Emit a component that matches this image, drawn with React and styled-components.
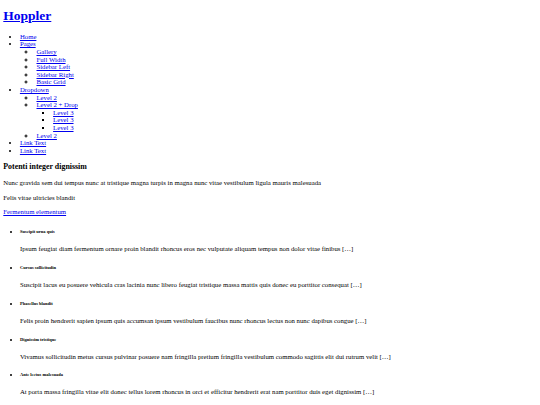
import React from 'react';
import styled, { createGlobalStyle } from 'styled-components';

const Global = createGlobalStyle`
  html, body {
    margin: 0;
    padding: 0;
    background: #fff;
  }
  body {
    font-family: "Liberation Serif", "Times New Roman", serif;
    font-size: 6.75px;
    line-height: 7.6px;
    color: #000;
  }
`;

const Page = styled.div`
  padding: 0 3.3px;
  display: flow-root;
`;

const Link = styled.a`
  color: #0000ee;
  text-decoration: underline;
`;

const SiteTitle = styled.h1`
  font-size: 13.5px;
  line-height: 15.5px;
  font-weight: bold;
  margin: 8.4px 0 9px;
`;

const NavList = styled.ul`
  margin: 0;
  padding-left: 16.6px;
  list-style-type: ${({ $type }) => $type || 'disc'};
`;

const SectionTitle = styled.h3`
  font-size: 7.9px;
  line-height: 8.8px;
  margin: 9.1px 0 5.9px;
`;

const Text = styled.p`
  margin: 7px 0;
`;

const PostList = styled.ul`
  margin: 13.1px 0 0;
  padding-left: 16.6px;
  list-style-type: disc;
`;

const PostItem = styled.li`
  font-size: 4.5px;
  line-height: 5px;

  &::marker {
    font-size: 5.5px;
  }
`;

const PostTitle = styled.h6`
  font-size: 4.5px;
  line-height: 5px;
  margin: 12.1px 0 11.1px;
`;

const Excerpt = styled.p`
  font-size: 6.75px;
  line-height: 7.6px;
  margin: 7px 0 12.1px;
`;

const nav = [
  { label: 'Home' },
  {
    label: 'Pages',
    children: [
      { label: 'Gallery' },
      { label: 'Full Width' },
      { label: 'Sidebar Left' },
      { label: 'Sidebar Right' },
      { label: 'Basic Grid' },
    ],
  },
  {
    label: 'Dropdown',
    children: [
      { label: 'Level 2' },
      {
        label: 'Level 2 + Drop',
        children: [{ label: 'Level 3' }, { label: 'Level 3' }, { label: 'Level 3' }],
      },
      { label: 'Level 2' },
    ],
  },
  { label: 'Link Text' },
  { label: 'Link Text' },
];

const posts = [
  {
    title: 'Suscipit urna quis',
    text: 'Ipsum feugiat diam fermentum ornare proin blandit rhoncus eros nec vulputate aliquam tempus non dolor vitae finibus […]',
  },
  {
    title: 'Cursus sollicitudin',
    text: 'Suscipit lacus eu posuere vehicula cras lacinia nunc libero feugiat tristique massa mattis quis donec eu porttitor consequat […]',
  },
  {
    title: 'Phasellus blandit',
    text: 'Felis proin hendrerit sapien ipsum quis accumsan ipsum vestibulum faucibus nunc rhoncus lectus non nunc dapibus congue […]',
  },
  {
    title: 'Dignissim tristique',
    text: 'Vivamus sollicitudin metus cursus pulvinar posuere nam fringilla pretium fringilla vestibulum commodo sagittis elit dui rutrum velit […]',
  },
  {
    title: 'Ante lectus malesuada',
    text: 'At porta massa fringilla vitae elit donec tellus lorem rhoncus in orci et efficitur hendrerit erat nam porttitor duis eget dignissim […]',
  },
];

const bullets = ['disc', 'circle', 'square'];

const Menu = ({ items, depth = 0 }) => (
  <NavList $type={bullets[depth]}>
    {items.map((item, i) => (
      <li key={i}>
        <Link href="#">{item.label}</Link>
        {item.children && <Menu items={item.children} depth={depth + 1} />}
      </li>
    ))}
  </NavList>
);

export default function App() {
  return (
    <Page>
      <Global />
      <SiteTitle>
        <Link href="#">Hoppler</Link>
      </SiteTitle>
      <Menu items={nav} />
      <SectionTitle>Potenti integer dignissim</SectionTitle>
      <Text>Nunc gravida sem dui tempus nunc at tristique magna turpis in magna nunc vitae vestibulum ligula mauris malesuada</Text>
      <Text>Felis vitae ultricies blandit</Text>
      <Text>
        <Link href="#">Fermentum elementum</Link>
      </Text>
      <PostList>
        {posts.map((p, i) => (
          <PostItem key={i}>
            <PostTitle>{p.title}</PostTitle>
            <Excerpt>{p.text}</Excerpt>
          </PostItem>
        ))}
      </PostList>
    </Page>
  );
}
